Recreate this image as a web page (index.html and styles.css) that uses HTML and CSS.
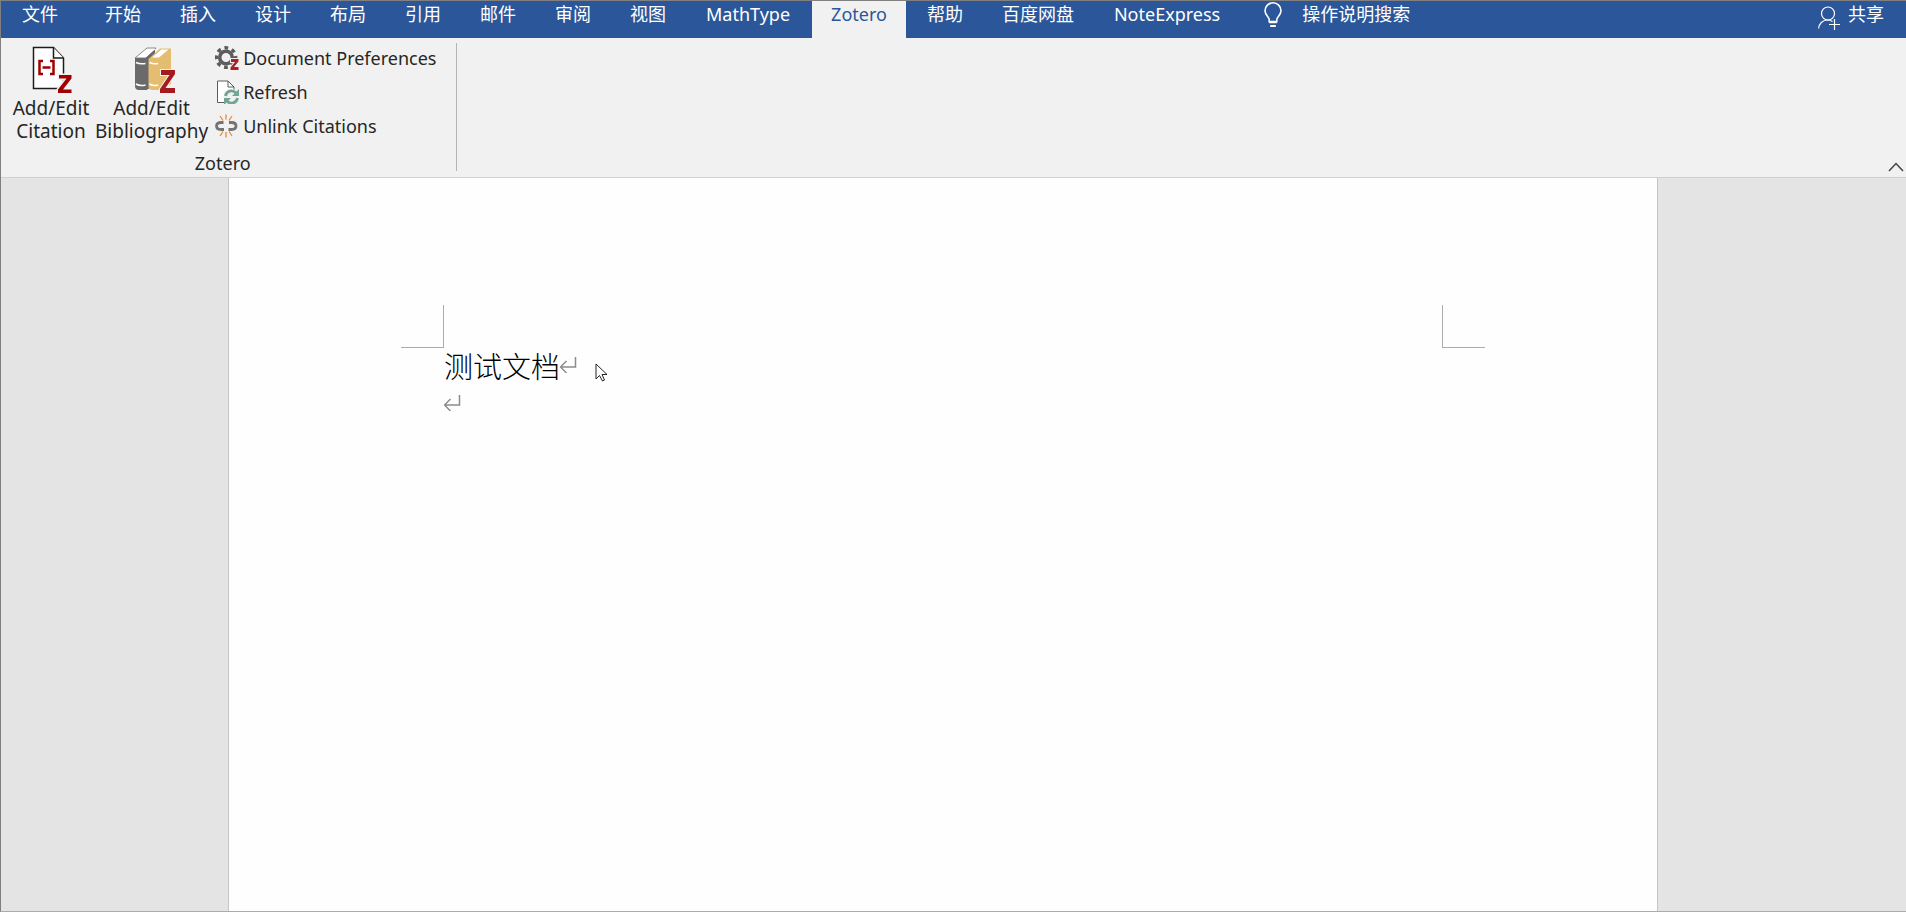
FILE: index.html
```html
<!DOCTYPE html>
<html lang="zh-CN">
<head>
  <meta charset="UTF-8">
  <title>测试文档</title>
  <link rel="stylesheet" href="styles.css">
</head>
<body>
  <header class="tab-bar">
    <nav class="tabs">
      <button class="tab file">文件</button>
      <button class="tab">开始</button>
      <button class="tab">插入</button>
      <button class="tab">设计</button>
      <button class="tab">布局</button>
      <button class="tab">引用</button>
      <button class="tab">邮件</button>
      <button class="tab">审阅</button>
      <button class="tab">视图</button>
      <button class="tab addin">MathType</button>
      <button class="tab addin active">Zotero</button>
      <button class="tab">帮助</button>
      <button class="tab">百度网盘</button>
      <button class="tab addin">NoteExpress</button>
    </nav>
    <div class="search">
      <label for="tellMe" aria-label="操作说明搜索">
        <svg width="18" height="26" viewBox="0 0 18 26" fill="none" stroke="#fff" stroke-width="1.6">
          <path d="M5.2 19.6v-2.2c0-2.4-4.2-4.2-4.2-8.6a8 8 0 0 1 16 0c0 4.4-4.2 6.2-4.2 8.6v2.2z"/>
          <path d="M5.2 20.4h7.6M6.2 24h5.6" stroke-width="1.8"/>
        </svg>
      </label>
      <input type="text" id="tellMe" placeholder="操作说明搜索">
    </div>
    <button class="share">
      <svg width="22" height="24" viewBox="0 0 22 24" fill="none" stroke="#fff" stroke-width="1.2">
        <circle cx="10" cy="7.5" r="6.5"/>
        <path d="M.6 22.5c.3-4.8 4-8.5 8.9-8.5 2 0 3.7.6 5 1.6"/>
        <path d="M11 18.5h11M16.5 13v11"/>
      </svg>
      <span>共享</span>
    </button>
  </header>

  <section class="ribbon">
    <div class="group">
      <div class="group-items">
        <button class="big-btn">
          <svg width="48" height="48" viewBox="0 0 48 48">
            <path d="M6.5 1.5h20l10 10.5v30.5h-30z" fill="#fff" stroke="#1c1c1c" stroke-width="1.5"/>
            <path d="M26.5 1.5v10.500h10" fill="#fff" stroke="#1c1c1c" stroke-width="1.5"/>
            <path d="M16 15h-3.500v13h3.500M23 15h3.500v13h-3.500M15.500 21.500h8" fill="none" stroke="#a00000" stroke-width="2.500"/>
            <path d="M32 29h12.500v3.500L36 43.500h8.500V47H31v-3.500l8.500-11H32z" fill="#a00000" stroke="#f1f1f1" stroke-width="3" paint-order="stroke"/>
          </svg>
          <span>Add/Edit<br>Citation</span>
        </button>
        <button class="big-btn">
          <svg width="48" height="48" viewBox="0 0 48 48">
            <path d="M7 12 19 2h9l-9.500 10z" fill="#fff" stroke="#8a8a8a"/>
            <path d="M7 12h10.500L27 3v36l-8.500 5H11q-4 0-4-4z" fill="#6a6a6a"/>
            <path d="M9.500 11 19.500 3h8l-9.500 8z" fill="#fff"/>
            <path d="M20.500 13 32 2.500h11V38l-13 6h-5.500q-4 0-4-4z" fill="#e5bd70"/>
            <path d="M24 11.500 33.500 3.500h7L31 11.500z" fill="#fff"/>
            <path d="M8 16.500q4 2 9.500 1M8 38q4 2.500 9.500 1M21.500 16.500q4 2 8.500 1M21.500 38q4 2.500 8.500 1" fill="none" stroke="#fff" stroke-width="1.500"/>
            <path d="M33 24h14v4L37.500 42H47v5H32v-4l9.500-14H33z" fill="#a51a1e" stroke="#f1f1f1" stroke-width="2" paint-order="stroke"/>
          </svg>
          <span>Add/Edit<br>Bibliography</span>
        </button>
        <div class="small-btns">
          <button class="small-btn">
            <svg width="24" height="24" viewBox="0 0 24 24">
              <circle cx="11" cy="11.500" r="6.300" fill="none" stroke="#5c5c5c" stroke-width="3.600"/>
              <circle cx="11" cy="11.500" r="9.700" fill="none" stroke="#5c5c5c" stroke-width="3.400" stroke-dasharray="3.800 3.818" stroke-dashoffset="1.900"/>
              <path d="M16 13h7.500v2.500L19 21h4.500v3H15.500v-2.500L20 16h-4z" fill="#b01e23" stroke="#f1f1f1" stroke-width="2" paint-order="stroke"/>
            </svg>
            <span>Document Preferences</span>
          </button>
          <button class="small-btn">
            <svg width="24" height="24" viewBox="0 0 24 24" fill="none">
              <path d="M2.500 1h10.500l6 6v15.500H2.500z" fill="#fff" stroke="#5c5c5c"/>
              <path d="M13 1v6h6" stroke="#5c5c5c"/>
              <circle cx="16.500" cy="17" r="8" fill="#f1f1f1"/>
              <path d="M10.500 16a6 6 0 0 1 10.500-3M22.500 18a6 6 0 0 1-10.500 3" stroke="#72a592" stroke-width="2.800"/>
              <path d="M24 9v7h-7zM9 25v-7h7z" fill="#72a592"/>
            </svg>
            <span>Refresh</span>
          </button>
          <button class="small-btn">
            <svg width="24" height="24" viewBox="0 0 24 24" fill="none">
              <path d="M8.500 8.500H6q-4.500 0-4.500 3.500T6 15.500h3M14 8.500h2.500q4.500 0 4.500 3.500t-4.500 3.500h-3" stroke="#747474" stroke-width="2.800"/>
              <path d="M11 .5v5M5 2l3 4.500M17 2l-3 4.500M11 18v5.500M5 22l3-4.500M17 22l-3-4.500" stroke="#e58a3e" stroke-width="1.300"/>
            </svg>
            <span>Unlink Citations</span>
          </button>
        </div>
      </div>
      <div class="group-label">Zotero</div>
    </div>
    <button class="collapse" aria-label="折叠功能区">
      <svg width="16" height="10" viewBox="0 0 16 10" fill="none" stroke="#444" stroke-width="1.5">
        <path d="M1 9l7-7.500L15 9"/>
      </svg>
    </button>
  </section>

  <main class="workspace">
    <article class="page">
      <div class="margins">
        <span class="corner left"></span>
        <span class="corner right"></span>
      </div>
      <div class="text">
        <p>测试文档<svg class="mark" width="17" height="16" viewBox="0 0 17 16"><path d="M15.500 0v10H1M6.500 4l-6 6 6 6"/></svg></p>
        <p><svg class="mark" width="17" height="16" viewBox="0 0 17 16"><path d="M15.500 0v10H1M6.500 4l-6 6 6 6"/></svg></p>
        <svg class="pointer" width="13" height="19" viewBox="0 0 13 19">
          <path d="M1 1v15l3.500-3.500L7.500 18l2-1-2.500-5.500H12z" fill="#fff" stroke="#222"/>
        </svg>
      </div>
    </article>
  </main>
</body>
</html>
```
FILE: styles.css
```css
* {
  box-sizing: border-box;
}
body {
  margin: 0;
  min-height: 100vh;
  display: flex;
  flex-direction: column;
  border: 1px solid #808080;
  border-right: none;
  border-bottom-color: #ababab;
  background: #e4e4e4;
  color: #262626;
  font-family: "Noto Sans", "Noto Sans CJK SC", sans-serif;
  font-size: 18px;
  line-height: 24px;
}
button {
  border: none;
  padding: 0;
  background: none;
  color: inherit;
  font: inherit;
}
svg {
  flex: none;
}

/* tabs */
.tab-bar {
  display: flex;
  height: 37px;
  background: #2b579a;
  color: #fff;
}
.tabs {
  display: flex;
  gap: 3px;
}
.tab {
  padding: 1px 18px 12px;
  white-space: nowrap;
}
.tab.file {
  padding: 1px 26px 12px 21px;
}
.tab.addin {
  padding: 1px 19px 12px;
}
.tab.active {
  background: #f1f1f1;
  color: #2b579a;
}
.search {
  display: flex;
  gap: 20px;
  padding: 1px 0 0 25px;
}
.search input {
  width: 200px;
  height: 24px;
  border: none;
  padding: 0;
  background: none;
  color: #fff;
  font: inherit;
  outline: none;
}
.search input::placeholder {
  color: #fff;
  opacity: 1;
}
.share {
  display: flex;
  gap: 8px;
  margin-left: auto;
  padding: 1px 22px 0 0;
}
.share svg {
  margin-top: 4px;
}

/* ribbon */
.ribbon {
  display: flex;
  justify-content: space-between;
  height: 140px;
  background: #f1f1f1;
  border-bottom: 1px solid #d0d0d0;
}
.group {
  display: flex;
  flex-direction: column;
  margin: 5px 0 6px;
  padding: 0 20px 0 8px;
  border-right: 1px solid #b4b4b4;
}
.group-items {
  display: flex;
}
.big-btn {
  display: flex;
  flex-direction: column;
  align-items: center;
  gap: 3px;
  min-width: 84px;
  padding-top: 3px;
  font-size: 19px;
  line-height: 23px;
}
.big-btn + .big-btn {
  margin-left: 2px;
}
.small-btns {
  display: flex;
  flex-direction: column;
  margin: -2px 0 0 7px;
}
.small-btn {
  display: flex;
  align-items: center;
  gap: 4px;
  height: 34px;
  white-space: nowrap;
}
.group-label {
  margin-top: auto;
  line-height: 16px;
  text-align: center;
}
.collapse {
  align-self: flex-end;
  padding: 0 2px 5px 0;
  line-height: 10px;
}

/* document */
.workspace {
  flex: 1;
  display: flex;
  justify-content: center;
  padding-right: 21px;
}
.page {
  width: 100%;
  max-width: 1430px;
  padding: 127px 172px 0;
  background: #fefefe;
  border: 1px solid #c6c6c6;
  border-top: none;
  border-bottom: none;
}
.margins {
  display: flex;
  justify-content: space-between;
}
.corner {
  width: 43px;
  height: 43px;
  border-bottom: 1px solid #ababab;
}
.corner.left {
  border-right: 1px solid #ababab;
}
.corner.right {
  border-left: 1px solid #ababab;
}
.text {
  position: relative;
  margin-top: -2px;
  padding: 0 43px;
  color: #000;
  font-family: "Noto Sans CJK SC", sans-serif;
  font-size: 29px;
  font-weight: 300;
  line-height: 38px;
}
.text p {
  display: flex;
  align-items: center;
  height: 38px;
  margin: 0;
}
.mark {
  fill: none;
  stroke: #8c8c8c;
  stroke-width: 1.5;
}
.pointer {
  position: absolute;
  left: 194px;
  top: 17px;
}
```
